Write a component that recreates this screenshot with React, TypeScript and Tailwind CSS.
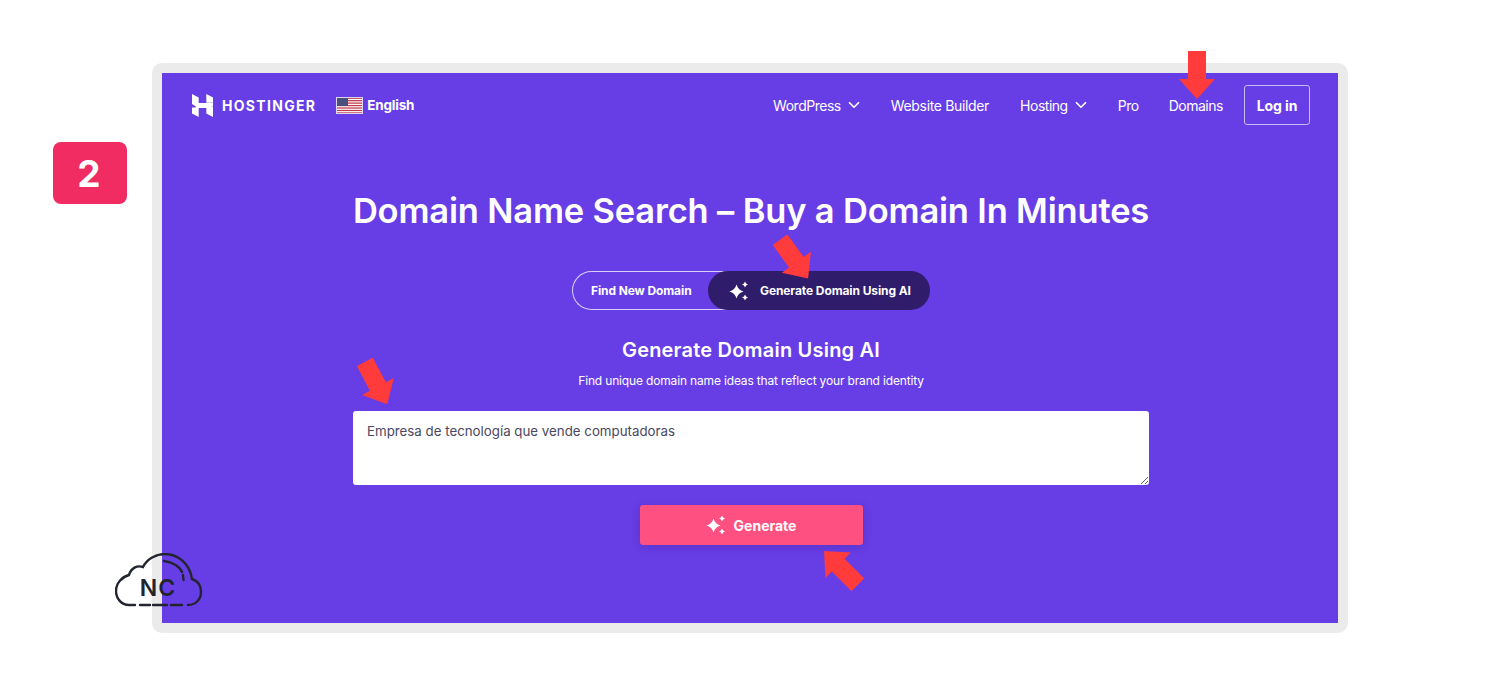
import { ChevronDown } from "lucide-react"

// Red annotation arrow, points down by default; rotated through className
function Arrow({ className }: { className: string }) {
  return (
    <svg viewBox="0 0 36 48" className={`absolute ${className}`}>
      <polygon points="9,0 27,0 27,28 36,28 18,48 0,28 9,28" fill="#ff3b3b" />
    </svg>
  )
}

function Sparkles({ className }: { className: string }) {
  return (
    <svg viewBox="0 0 20 20" className={className} fill="#ffffff">
      <path d="M7.5 3.5 Q9 9 14.5 10.5 Q9 12 7.5 17.5 Q6 12 0.5 10.5 Q6 9 7.5 3.5Z" />
      <path d="M16 0.5 Q16.6 2.9 19 3.5 Q16.6 4.1 16 6.5 Q15.4 4.1 13 3.5 Q15.4 2.9 16 0.5Z" />
      <path d="M16 13.5 Q16.6 15.9 19 16.5 Q16.6 17.1 16 19.5 Q15.4 17.1 13 16.5 Q15.4 15.9 16 13.5Z" />
    </svg>
  )
}

function HostingerMark() {
  return (
    <svg viewBox="0 0 22 24" className="h-[25px] w-[21px]" fill="#ffffff">
      <path d="M0 0 L7 3.6 V9.5 L22 9.5 V13 H4 L0 10.5Z" />
      <path d="M15 0 L22 3.6 V9 H15Z" />
      <path d="M0 14 H7 V24 L0 20.4Z" />
      <path d="M4 11 H18 L22 13.5 V24 L15 20.4 V14.5 H4Z" />
    </svg>
  )
}

function UsFlag() {
  const stripes = [0, 1, 2, 3, 4, 5, 6]
  return (
    <svg viewBox="0 0 27 17" className="h-[17px] w-[27px]">
      <rect width="27" height="17" fill="#ffffff" />
      {stripes.map((s) => (
        <rect key={s} y={s * 2.45 + 0.6} width="27" height="1.25" fill="#c0394a" />
      ))}
      <rect x="0.5" y="0.5" width="11.5" height="8.5" fill="#4a4f7d" />
      <rect x="0.5" y="0.5" width="26" height="16" fill="none" stroke="#d9d6ee" />
    </svg>
  )
}

function CloudLogo() {
  return (
    <svg viewBox="0 0 88 56" className="absolute left-[115px] top-[553px] h-14 w-[88px]" fill="none" stroke="#22252f" strokeWidth="2.4" strokeLinecap="round">
      <path d="M20 52 H14 C6 52 1 45 1 38 C1 30 7 24 14 22 C16 15 22 12 28 14 C32 6 41 1 50 1 C63 1 75 11 77 26 C83 28 86 33 86 39 C86 47 80 52 73 52" />
      <path d="M25 52 H35 M38 52 H52 M56 52 H67" />
      <path d="M49 8 C58 9 65 14 67 19 M68 22 L68.5 27" />
      <text x="43" y="43" textAnchor="middle" fontSize="23" fontWeight="600" fill="#22252f" stroke="none" fontFamily="Inter, sans-serif" letterSpacing="1">NC</text>
    </svg>
  )
}

export default function App() {
  return (
    <div className="relative h-[696px] w-[1500px] overflow-hidden bg-white font-['Inter',sans-serif] text-white">
      <div className="flex items-start pl-[53px] pt-[63px]">
        <div className="mt-[79px] flex h-[62px] w-[74px] items-center justify-center rounded-lg bg-[#f02c62] pr-[2px] text-[37px] font-bold leading-none">
          2
        </div>

        <div className="ml-[25px] h-[570px] w-[1196px] rounded-[10px] border-10 border-[#ebebeb] bg-[#673de6]">
          <nav className="flex items-center pl-[30px] pr-[28px] pt-3">
            <HostingerMark />
            <span className="ml-[9px] text-[14px] font-bold tracking-[1.3px]">HOSTINGER</span>
            <div className="ml-[20px] flex items-center gap-1">
              <UsFlag />
              <span className="text-[13.5px] font-bold tracking-[-0.2px]">English</span>
            </div>
            <div className="ml-auto flex items-center text-[14px] tracking-[-0.48px]">
              <span>WordPress</span>
              <ChevronDown className="ml-1 size-[18px]" strokeWidth={2.3} />
              <span className="ml-[28px] tracking-[-0.34px]">Website Builder</span>
              <span className="ml-[31px]">Hosting</span>
              <ChevronDown className="ml-1 size-[18px]" strokeWidth={2.3} />
              <span className="ml-[28px]">Pro</span>
              <span className="ml-[30px]">Domains</span>
              <span className="ml-[21px] flex h-10 w-[66px] items-center justify-center rounded-[3px] border border-[#c9bbf6] font-bold tracking-[-0.1px]">
                Log in
              </span>
            </div>
          </nav>

          <main className="ml-[191px] flex w-[796px] flex-col items-center">
            <h1 className="mt-[65px] whitespace-nowrap text-[34.5px] font-semibold leading-[42px] tracking-[-0.18px]">
              Domain Name Search – Buy a Domain In Minutes
            </h1>

            <div className="mt-[39px] flex h-[39px] w-[358px]">
              <div className="flex w-[156px] items-center rounded-l-full border border-r-0 border-[#d9d0fa] pl-[18px] text-[12px] font-bold tracking-[-0.1px]">
                Find New Domain
              </div>
              <div className="-ml-[20px] flex w-[222px] items-center rounded-full bg-[#2f1c6a] pl-[21px] text-[12px] font-bold tracking-[-0.1px]">
                <Sparkles className="size-5" />
                <span className="ml-[11px]">Generate Domain Using AI</span>
              </div>
            </div>

            <h2 className="mt-[27px] text-[20px] font-semibold leading-[26px] tracking-[0.2px]">Generate Domain Using AI</h2>
            <p className="mt-[9px] text-[12px] leading-[18px] tracking-[-0.16px]">Find unique domain name ideas that reflect your brand identity</p>

            <textarea
              defaultValue="Empresa de tecnología que vende computadoras"
              className="mt-[21px] block h-[74px] w-full rounded-[3px] bg-white px-[14px] py-[11px] text-[13.3px] leading-[18px] text-[#4a4760] outline-none"
            />

            <button className="mt-[20px] flex h-10 w-[223px] items-center justify-center gap-2 rounded-[3px] bg-[#ff5082] text-[14px] font-bold shadow-[0_2px_8px_rgba(47,28,106,0.25)]">
              <Sparkles className="size-5" />
              Generate
            </button>
          </main>
        </div>
      </div>

      {/* annotation overlays */}
      <Arrow className="left-[1179px] top-[51px] h-[48px] w-[36px]" />
      <Arrow className="left-[776px] top-[235px] h-[48px] w-[36px] -rotate-[36deg]" />
      <Arrow className="left-[358px] top-[359px] h-[48px] w-[36px] -rotate-[28deg]" />
      <Arrow className="left-[823px] top-[544px] h-[48px] w-[36px] rotate-[135deg]" />
      <CloudLogo />
    </div>
  )
}
